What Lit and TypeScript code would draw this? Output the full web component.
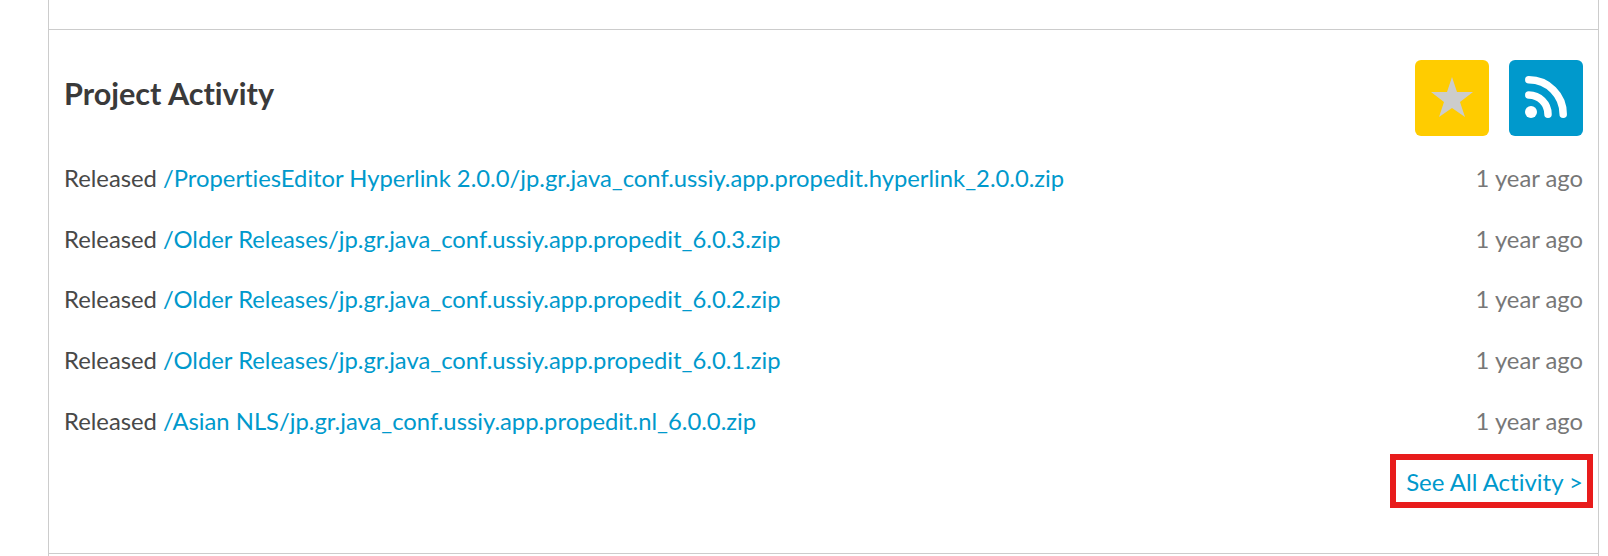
import { LitElement, html, css } from "lit";
import { customElement } from "lit/decorators.js";

const rows = [
  "/PropertiesEditor Hyperlink 2.0.0/jp.gr.java_conf.ussiy.app.propedit.hyperlink_2.0.0.zip",
  "/Older Releases/jp.gr.java_conf.ussiy.app.propedit_6.0.3.zip",
  "/Older Releases/jp.gr.java_conf.ussiy.app.propedit_6.0.2.zip",
  "/Older Releases/jp.gr.java_conf.ussiy.app.propedit_6.0.1.zip",
  "/Asian NLS/jp.gr.java_conf.ussiy.app.propedit.nl_6.0.0.zip",
];

@customElement("app-root")
export class AppRoot extends LitElement {
  static styles = css`
    :host {
      display: block;
      height: 556px;
      overflow: hidden;
      background: #fff;
      font-family: Lato, "Liberation Sans", sans-serif;
      font-size: 23.8px;
      font-variant-ligatures: none;
      color: #484848;
    }

    .frame {
      box-sizing: border-box;
      height: 556px;
      margin: 0 9px 0 48px;
      border-left: 1px solid #ccc;
      border-right: 1px solid #ccc;
      padding-top: 29px;
    }

    .panel {
      box-sizing: border-box;
      height: 525px;
      border-top: 1px solid #ccc;
      border-bottom: 1px solid #ccc;
      padding: 30px 15px 0 15px;
    }

    header {
      display: flex;
      align-items: center;
      height: 76px;
      gap: 20px;
    }

    h2 {
      flex: 1;
      margin: 0 0 10px;
      font-size: 30.6px;
      font-weight: 700;
      color: #3a3a3a;
    }

    .btn {
      box-sizing: border-box;
      display: flex;
      align-items: center;
      justify-content: center;
      width: 74px;
      height: 76px;
      padding-bottom: 2px;
      border-radius: 6px;
    }

    .star {
      background: #ffcc00;
    }

    .rss {
      background: #0099cc;
    }

    ul {
      list-style: none;
      margin: 12px 0 3px;
      padding: 0;
    }

    li {
      display: flex;
      justify-content: space-between;
      align-items: center;
      height: 60.6px;
    }

    a {
      color: #0099cc;
      text-decoration: none;
    }

    time {
      color: #777;
    }

    .more {
      display: flex;
      justify-content: flex-end;
      margin-right: -10px;
    }

    .more a {
      box-sizing: border-box;
      display: flex;
      align-items: center;
      height: 54px;
      padding: 2px 4px 0 10px;
      border: 6px solid #e81c1c;
      font-size: 24px;
    }
  `;

  render() {
    return html`<div class="frame">
      <section class="panel">
        <header>
          <h2>Project Activity</h2>
          <a class="btn star" href="#" aria-label="Favorite">
            <svg width="42" height="40" viewBox="0 0 42 40">
              <path fill="#ccc" d="M21 0l5 15h16L29 25l5 15-13-9-13 9 5-15L0 15h16z" />
            </svg>
          </a>
          <a class="btn rss" href="#" aria-label="Feed">
            <svg width="42" height="42" viewBox="0 0 42 42">
              <circle cx="6" cy="36" r="6" fill="#fff" />
              <path
                fill="none"
                stroke="#fff"
                stroke-width="7.500"
                stroke-linecap="round"
                d="M3.800 19A19.200 19.200 0 0 1 23 38.200M3.800 3.800A34.400 34.400 0 0 1 38.200 38.200"
              />
            </svg>
          </a>
        </header>
        <ul>
          ${rows.map(
            (r) => html`<li>
              <span>Released <a href="#">${r}</a></span>
              <time>1 year ago</time>
            </li>`
          )}
        </ul>
        <div class="more"><a href="#">See All Activity &gt;</a></div>
      </section>
    </div>`;
  }
}
